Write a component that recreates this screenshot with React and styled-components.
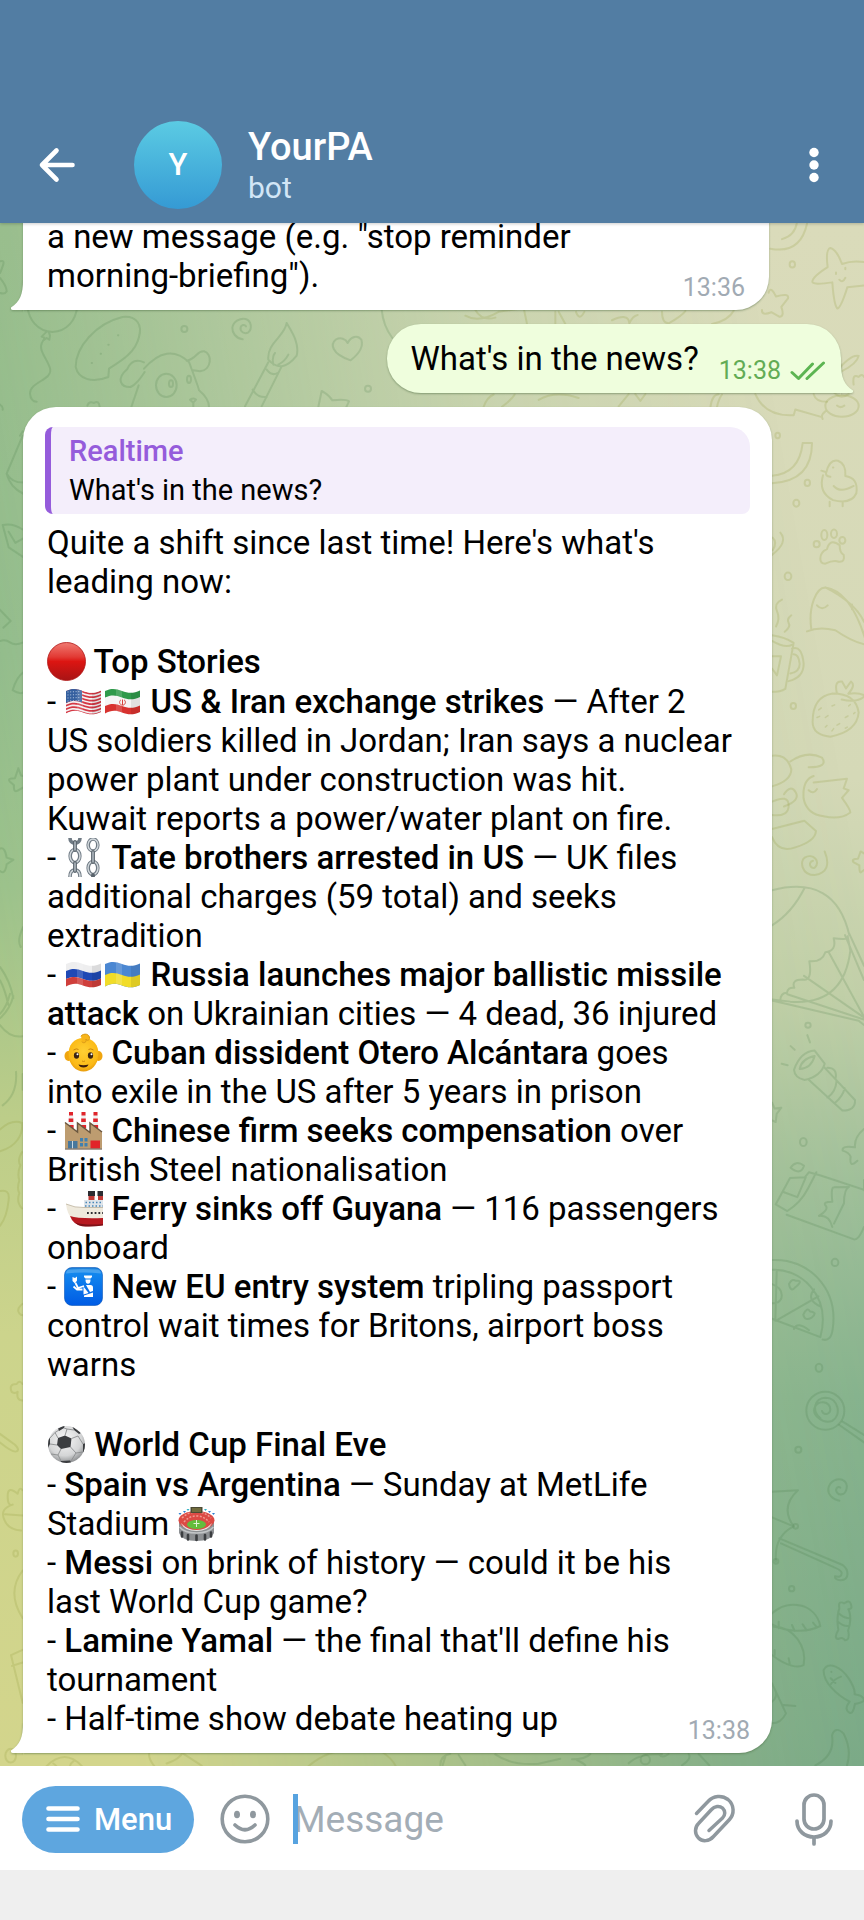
import React from 'react'
import styled, { createGlobalStyle } from 'styled-components'

const GlobalStyle = createGlobalStyle`
  * {
    box-sizing: border-box;
  }
  body {
    margin: 0;
    background: #efefef;
    font-family: Roboto, "Noto Sans", sans-serif;
    color: #000;
  }
  button, input {
    font-family: inherit;
  }
  p, h1, h2, ul {
    margin: 0;
    padding: 0;
    font: inherit;
  }
`;

const Screen = styled.div`
  display: flex;
  flex-direction: column;
  height: 100vh;
  overflow: hidden;
`;

/* ---------- header ---------- */

const Header = styled.header`
  position: relative;
  z-index: 2;
  flex: none;
  display: flex;
  align-items: center;
  height: 223px;
  padding: 106px 25px 0 32px;
  background: #527da3;
  box-shadow: 0 1px 3px rgba(0, 0, 0, 0.2);
`;

const IconButton = styled.button`
  display: flex;
  flex: none;
  align-items: center;
  justify-content: center;
  width: 50px;
  height: 50px;
  padding: 0;
  border: 0;
  background: none;
  color: ${props => props.$color || '#fff'};

  svg {
    display: block;
  }
`;

const Avatar = styled.div`
  flex: none;
  width: 88px;
  height: 88px;
  margin: 0 26px 0 52px;
  border-radius: 50%;
  background: linear-gradient(#5bcbe3, #359ad4);
  color: #fff;
  font-size: 31px;
  font-weight: 500;
  line-height: 88px;
  text-align: center;
`;

const Peer = styled.div`
  flex: 1;
  min-width: 0;
  padding-top: 2px;

  h1 {
    color: #fff;
    font-size: 38px;
    font-weight: 500;
    line-height: 44px;
  }
  p {
    color: #d2e6f6;
    font-size: 30px;
    line-height: 38px;
  }
`;

/* ---------- chat ---------- */

const Chat = styled.main`
  position: relative;
  z-index: 1;
  flex: 1;
  min-height: 0;
  overflow: hidden;
  display: flex;
  flex-direction: column;
  justify-content: flex-end;
  gap: 14px;
  padding: 0 23px 13px;
  background: linear-gradient(#dadbba 0%, #d5d9b7 36%, #c2d0a9 50%, #9fbf9b 62%, #82b18e 76%, #70a587 100%);

  &::before {
    content: "";
    position: absolute;
    inset: 0;
    background: linear-gradient(#8ab783 0%, #8dba88 28%, #9ac18a 43%, #bccd89 58%, #ccd48c 72%, #d3d58c 100%);
    mask-image: linear-gradient(80deg, #000 12%, rgba(0, 0, 0, 0.5) 45%, rgba(0, 0, 0, 0.2) 65%, transparent 90%);
  }
`;

const Doodles = styled.svg`
  position: absolute;
  inset: 0;
  width: 100%;
  height: 100%;
  fill: none;
  stroke: rgba(60, 115, 60, 0.17);
  stroke-width: 2;
  stroke-linecap: round;
  stroke-linejoin: round;

  .olive {
    stroke: rgba(140, 150, 50, 0.2);
  }
  path, circle, ellipse {
    vector-effect: non-scaling-stroke;
  }
`;

const Bubble = styled.article`
  position: relative;
  flex: none;
  align-self: ${props => (props.$out ? 'flex-end' : 'flex-start')};
  width: ${props => (props.$out ? 'auto' : `calc(100% - ${props.$inset || 69}px)`)};
  padding: ${props => props.$pad};
  border-radius: ${props => props.$radius};
  background: ${props => (props.$out ? '#effedd' : '#fff')};
  box-shadow: 0 1px 2px rgba(60, 90, 50, 0.45);
  font-size: 33px;
  line-height: 39px;
`;

const TailShape = styled.svg`
  position: absolute;
  bottom: 0;
  ${props => (props.$out ? 'right: -12px; transform: scaleX(-1);' : 'left: -12px;')}
  width: 24px;
  height: 30px;
  fill: ${props => (props.$out ? '#effedd' : '#fff')};
  filter: drop-shadow(0 1px 1px rgba(60, 90, 50, 0.4));
  clip-path: inset(0 12px -3px -3px);
`;

const LastLine = styled.div`
  display: flex;
  align-items: flex-end;
  justify-content: space-between;
  gap: 20px;
`;

const Meta = styled.span`
  display: flex;
  flex: none;
  align-items: center;
  gap: 9px;
  margin-bottom: -8px;
  color: ${props => (props.$out ? '#62ac55' : '#a1aab3')};
  font-size: 25px;
  line-height: 30px;
`;

const Quote = styled.blockquote`
  margin: 0 0 9px -2px;
  padding: 5px 18px 4px;
  border-left: 6px solid #955cdb;
  border-radius: 8px 20px 8px 8px;
  background: #f4eefb;
  font-size: 29px;
  line-height: 39px;

  h2 {
    color: #955cdb;
    font-weight: 500;
  }
`;

const Story = styled.div`
  margin-right: 7px;

  h2, strong {
    font-weight: 500;
  }
  h2 {
    margin: 41px 0 1px;
  }
  ul {
    list-style: none;
  }
`;

const EmojiSvg = styled.svg`
  display: inline-block;
  width: 39px;
  height: 39px;
  vertical-align: bottom;
`;

/* ---------- composer ---------- */

const Composer = styled.form`
  position: relative;
  z-index: 2;
  flex: none;
  display: flex;
  align-items: center;
  height: 104px;
  padding: 2px 25px 0 22px;
  background: #fff;
`;

const MenuButton = styled.button`
  display: flex;
  flex: none;
  align-items: center;
  gap: 13px;
  height: 67px;
  margin-right: 26px;
  padding: 0 22px 0 23px;
  border: 0;
  border-radius: 34px;
  background: #5ea6df;
  color: #fff;
  font-size: 31px;
  font-weight: 500;
`;

const Tools = styled.div`
  display: flex;
  flex: none;
  gap: 50px;
`;

const Field = styled.label`
  position: relative;
  flex: 1;
  min-width: 0;
  margin-left: 23px;

  &::after {
    content: "";
    position: absolute;
    top: 0;
    left: 0;
    width: 5px;
    height: 50px;
    background: #57a3e0;
  }
  input {
    display: block;
    width: 100%;
    height: 50px;
    padding: 0;
    border: 0;
    outline: 0;
    background: none;
    font-size: 37px;
  }
  input::placeholder {
    color: #a3adb6;
    opacity: 1;
  }
`;

const NavBar = styled.footer`
  flex: none;
  height: 50px;
  background: #efefef;
`;

/* ---------- emoji ---------- */

const Flag = ({ label, children, id }) => (
    <EmojiSvg viewBox="0 0 39 39" role="img" aria-label={label}>
        <clipPath id={id}>
            <path d="M2 9 C8 6 13 6.500 19 9 C25 11.500 31 11.500 37 8.500 V30 C31 33 25 33 19 30.500 C13 28 8 28 2 31.500Z" />
        </clipPath>
        <g clipPath={`url(#${id})`}>
            {children}
            <path d="M13 5h6v30h-6z" fill="#fff" opacity=".15" />
            <path d="M28 5h9v30h-9z" fill="#000" opacity=".08" />
        </g>
    </EmojiSvg>
)

const wave = (y, h) =>
    `M2 ${y} C8 ${y - 3} 13 ${y - 2.5} 19 ${y} S31 ${y + 2.5} 37 ${y - 0.5} v${h} C31 ${y + h + 2.5} 25 ${y + h + 2.5} 19 ${y + h} S8 ${y + h - 3} 2 ${y + h}Z`

const UsFlag = () => (
    <Flag label="United States" id="us">
        <path d="M0 0h39v39H0z" fill="#f4f1f2" />
        {[0, 1, 2, 3, 4, 5, 6].map(i => (
            <path key={i} d={wave(9 + i * 3.45, 1.8)} fill="#d53945" />
        ))}
        <path d="M2 5 H18 V20.500 C12 18 8 18 2 21Z" fill="#35609f" />
        {[10, 13, 16, 19].map(y => (
            <path key={y} d={`M3.500 ${y} L17 ${y - 0.5}`} stroke="#c9d7ea" strokeWidth=".9" strokeDasharray="1 1.700" />
        ))}
    </Flag>
)

const IranFlag = () => (
    <Flag label="Iran" id="ir">
        <path d="M0 0h39v39H0z" fill="#f5f4f4" />
        <path d={wave(7, 8.5)} fill="#2f9a4b" />
        <path d={wave(24, 9)} fill="#d8322f" />
        <g fill="none" stroke="#d8433c" strokeWidth="1">
            <path d="M19.500 17.500v6M18 17.700c-2 1.500-2 4.500 1 5.500M21 17.700c2 1.500 2 4.500-1 5.500" />
        </g>
    </Flag>
)

const RussiaFlag = () => (
    <Flag label="Russia" id="ru">
        <path d="M0 0h39v39H0z" fill="#eeeeef" />
        <path d={wave(16, 8)} fill="#1f49b5" />
        <path d={wave(24, 9)} fill="#cf3f3b" />
    </Flag>
)

const UkraineFlag = () => (
    <Flag label="Ukraine" id="ua">
        <path d="M0 0h39v39H0z" fill="#4b87d2" />
        <path d={wave(20, 13)} fill="#f1dc28" />
    </Flag>
)

const RedCircle = () => (
    <EmojiSvg viewBox="0 0 39 39" role="img" aria-label="Red circle">
        <defs>
            <linearGradient id="red" x1="0" y1="0" x2="0" y2="1">
                <stop offset="0" stopColor="#f07a72" />
                <stop offset=".38" stopColor="#e23a34" />
                <stop offset=".5" stopColor="#dc1512" />
                <stop offset="1" stopColor="#a81415" />
            </linearGradient>
        </defs>
        <circle cx="19.500" cy="19.500" r="19" fill="url(#red)" stroke="#b01615" strokeWidth=".8" />
    </EmojiSvg>
)

const Chains = () => (
    <EmojiSvg viewBox="0 0 39 39" role="img" aria-label="Chains">
        <g fill="none" stroke="#6f7a84" strokeWidth="3.600">
            <path d="M6 0c0 3 2 5 5 5s5-2 5-5" />
            <ellipse cx="11" cy="18" rx="4.800" ry="6.500" />
            <path d="M6 39c0-5 2-7 5-7s5 2 5 7" />
            <ellipse cx="29" cy="7" rx="4.800" ry="6" />
            <ellipse cx="29" cy="30" rx="4.800" ry="6.500" />
        </g>
        <g fill="none" stroke="#d3d9dd" strokeWidth="1.400">
            <ellipse cx="11" cy="18" rx="5" ry="6.500" />
            <ellipse cx="29" cy="7" rx="5" ry="6" />
            <ellipse cx="29" cy="30" rx="5" ry="6.500" />
            <path d="M6 39c0-5 2-7 5-7s5 2 5 7" />
        </g>
        <g stroke="#59636c" strokeWidth="3.800" strokeLinecap="round">
            <path d="M11 4v8M11 25v8M29 14v10M29 37v2" />
        </g>
        <g stroke="#b4bdc4" strokeWidth="1.500" strokeLinecap="round">
            <path d="M11 4v8M11 25v8M29 14v10" />
        </g>
    </EmojiSvg>
)

const Baby = () => (
    <EmojiSvg viewBox="0 0 39 39" role="img" aria-label="Baby">
        <defs>
            <radialGradient id="skin" cx=".5" cy=".4" r=".6">
                <stop offset="0" stopColor="#ffcf33" />
                <stop offset=".8" stopColor="#fbb916" />
                <stop offset="1" stopColor="#e89c0c" />
            </radialGradient>
        </defs>
        <ellipse cx="4.500" cy="23" rx="4" ry="5" fill="#f0a50e" />
        <ellipse cx="34.500" cy="23" rx="4" ry="5" fill="#f0a50e" />
        <path d="M19.500 5C29 5 35 12 34.500 22 C34 32 27 38.500 19.500 38.500 S5 32 4.500 22 C4 12 10 5 19.500 5Z" fill="url(#skin)" />
        <path d="M17 3c3-3.500 9-2 8.500 2.500-.3 2-3 2.500-3.500.5 1 3-2 5-4 3" fill="#f8b51a" stroke="#d99a18" strokeWidth="1" strokeLinecap="round" />
        <g fill="#3a2412">
            <ellipse cx="12.500" cy="22.500" rx="2.600" ry="3.200" />
            <ellipse cx="26.500" cy="22.500" rx="2.600" ry="3.200" />
        </g>
        <circle cx="13.500" cy="21.300" r="1" fill="#fff" />
        <circle cx="27.500" cy="21.300" r="1" fill="#fff" />
        <path d="M9.500 17q3-2 5-.500M24.500 16.500q2-1.500 5 .5" fill="none" stroke="#c98510" strokeWidth="1" />
        <path d="M14.500 31.500q5 1.500 10 0-1 3-5 3t-5-3z" fill="#3c1d0c" />
        <path d="M18 28q1.500 1 3 0" fill="none" stroke="#cf8a10" strokeWidth="1" />
    </EmojiSvg>
)

const Factory = () => (
    <EmojiSvg viewBox="0 0 39 39" role="img" aria-label="Factory">
        {[5, 17.5, 29.5].map(x => (
            <g key={x}>
                <path d={`M${x} 1h4l1 19h-6z`} fill="#f0eeee" />
                <path d={`M${x} 1h4v3.500h-4zM${x - 0.3} 7.500h4.600v3.500h-4.600zM${x - 0.6} 14h5.200v3.500h-5.200z`} fill="#e0242b" />
            </g>
        ))}
        <path d="M1 11.500L13.500 21V12L26 21.500V12L38 21V38H1z" fill="#bd9c70" />
        <path d="M1 11.500L13.500 21V12L26 21.500V12L38 21" fill="none" stroke="#6b573f" strokeWidth="1.500" />
        <path d="M4 30h9.500v8H4z" fill="#47779c" />
        <path d="M8.500 30v8" stroke="#c9d8e2" strokeWidth="1" />
        <path d="M16 27h3v3.500h-3zM20.500 27h3v3.500h-3zM16 32h3v3.500h-3zM20.500 32h3v3.500h-3z" fill="#3f80b0" />
        <path d="M26.500 29.500h9.500V38h-9.500z" fill="#e1242a" />
        <path d="M1 38h37" stroke="#8c8174" strokeWidth="1.500" />
    </EmojiSvg>
)

const Ship = () => (
    <EmojiSvg viewBox="0 0 39 39" role="img" aria-label="Ship">
        <path d="M24.500 3h6v9h-6zM34 3h5v9h-5z" fill="#c03a36" />
        <path d="M24 2h7v5h-7zM33.500 2H39v5h-5.500z" fill="#2c2c31" />
        <path d="M20 11h19v9H20z" fill="#dfe5ea" />
        <path d="M21.500 13.500H39M21 17H39" stroke="#4886b8" strokeWidth="1.500" strokeDasharray="1.500 2" />
        <path d="M2 15q9 4 18 3.500H39V31H9Q3 25 2 15z" fill="#efeadd" />
        <path d="M2 15q9 4 18 3.500H39" fill="none" stroke="#bcb29d" strokeWidth=".8" />
        <path d="M23 24H39" stroke="#2c2c31" strokeWidth="1.800" strokeDasharray="1.800 2" />
        <path d="M6 27q9 3 33 2v7q-10 2-21 1Q9 35.500 6 27z" fill="#b71920" />
        <path d="M11 33.500q10 3 28 1.500v1.500q-10 1.500-21 .8-4-.5-7-3.800z" fill="#7e1117" />
    </EmojiSvg>
)

const Passport = () => (
    <EmojiSvg viewBox="0 0 39 39" role="img" aria-label="Passport control">
        <defs>
            <linearGradient id="blue" x1="0" y1="0" x2="0" y2="1">
                <stop offset="0" stopColor="#1c7fd6" />
                <stop offset=".15" stopColor="#1287ee" />
                <stop offset="1" stopColor="#005be4" />
            </linearGradient>
        </defs>
        <rect x=".5" y=".5" width="38" height="38" rx="7.500" fill="url(#blue)" stroke="#0a56b8" strokeWidth=".6" />
        <path d="M5 2.500q14-1 29 0 3 1 3 4-17-2-35 0 0-3 3-4z" fill="#6fb9f5" opacity=".55" />
        <g fill="#fff">
            <path d="M20 8.500h8v1.500l-1.500 1.500h-5L20 10z" />
            <path d="M21.500 12.500h5q0 4.300-2.500 4.300t-2.500-4.300z" />
            <path d="M8.500 10l2.500 1 2-1.500v4l-2 3-2.500-2.500z" />
            <path d="M22 18h4.500q2.500 0 2.500 2.500V24l-3 1z" />
            <path d="M19.500 19.500l5 6.500-5 1.500z" />
            <path d="M20 28.500l9-3V30h-9z" />
        </g>
        <path d="M11.500 16l2.500 5 6-2M9.500 19.500l3.500 3h5.500" fill="none" stroke="#fff" strokeWidth="1.800" strokeLinejoin="round" />
    </EmojiSvg>
)

const Football = () => (
    <EmojiSvg viewBox="0 0 39 39" role="img" aria-label="Football">
        <defs>
            <radialGradient id="ball" cx=".45" cy=".35" r=".65">
                <stop offset="0" stopColor="#f8f8f8" />
                <stop offset=".7" stopColor="#d4d5d6" />
                <stop offset="1" stopColor="#909294" />
            </radialGradient>
            <clipPath id="ball-edge">
                <circle cx="19.500" cy="19.500" r="18.500" />
            </clipPath>
        </defs>
        <circle cx="19.500" cy="19.500" r="18.500" fill="url(#ball)" />
        <g clipPath="url(#ball-edge)">
            <g fill="#3b3d40">
                <path d="M11 13L18 10.500L24.500 13.500L23.500 22L14 24L10 20z" />
                <path d="M11 3.500L18 0L17 3L12 6z M25 1L34 8L32 9L27 5z M0 15L3 13L3 19L1 23z M36 19L39 18V28L36 28z M14 36L23 35.500L25 39H13z M3 29L6 34L5 36L0 30z" />
            </g>
            <path d="M11 13L8 7.500M18 10.500L20 4M24.500 13.500L31 11M23.500 22L29 28M14 24L11 30M10 20L3 19M29 28L36 27M29 28L24 36M11 30L14 36M11 30L4 29M20 4L27 5M20 4L17 3M8 7.500L12 5M8 7.500L3 13M31 11L36 19" fill="none" stroke="#8b8d8f" strokeWidth=".9" />
        </g>
    </EmojiSvg>
)

const Stadium = () => (
    <EmojiSvg viewBox="0 0 39 39" role="img" aria-label="Stadium">
        <path d="M2 16v13q3 8 17.500 8T37 29V16z" fill="#8d9093" />
        <path d="M2.500 23q5 6 17 6t17-6" fill="none" stroke="#c2c5c7" strokeWidth="1.500" />
        <path d="M5 28.500v4M11 31v4.500M28 31v4.500M34 28.500v4M19.500 31.500v4.500" stroke="#3b3e41" strokeWidth="2.600" strokeLinecap="round" />
        <ellipse cx="19.500" cy="16.500" rx="18" ry="9.500" fill="#dc4a44" />
        <path d="M5 14q6-6 14.500-6T34 14M7 18q5-6 12.500-6T32 18" fill="none" stroke="#ef9a90" strokeWidth="1.500" strokeDasharray="2 1.500" />
        <path d="M4 19q6 7 15.500 7T35 19q-3 8-15.500 8T4 19z" fill="#e9e6e4" />
        <ellipse cx="19.500" cy="20.500" rx="9.500" ry="4.500" fill="#63bd3c" />
        <path d="M16.500 19.500h6M19.500 16v7" stroke="#dff3d2" strokeWidth="1" />
        <path d="M13.500 3h12v6h-12z" fill="#4b4a34" />
        <path d="M15 5h9M15 7h9" stroke="#a9a14b" strokeWidth=".8" />
        <path d="M1.500 9l3 0-1.500 2zM6 7l3 0-1.500 2z" fill="#2f7fd0" />
        <path d="M9.500 5l3 0-1.500 2zM27 5l3 0-1.500 2z" fill="#38b3c4" />
        <path d="M31 7l3 0-1.500 2zM35 9l3 0-1.500 2z" fill="#2f7fd0" />
    </EmojiSvg>
)

/* ---------- icons ---------- */

const BackIcon = () => (
    <svg width="38" height="38" viewBox="0 0 38 38" fill="none" stroke="#fff" strokeWidth="4.600" strokeLinecap="round" strokeLinejoin="round">
        <path d="M34.500 19H4M18.500 4.500L4 19L18.500 33.500" />
    </svg>
)

const DotsIcon = () => (
    <svg width="12" height="38" viewBox="0 0 12 38" fill="#fff">
        <circle cx="6" cy="6.500" r="4.700" />
        <circle cx="6" cy="19" r="4.700" />
        <circle cx="6" cy="31.500" r="4.700" />
    </svg>
)

const BarsIcon = () => (
    <svg width="36" height="28" viewBox="0 0 36 28" stroke="#fff" strokeWidth="4.600" strokeLinecap="round">
        <path d="M3.500 3.500h29M3.500 14h29M3.500 24.500h29" />
    </svg>
)

const SmileIcon = () => (
    <svg width="50" height="50" viewBox="0 0 50 50" fill="none" stroke="currentColor" strokeWidth="3.600" strokeLinecap="round">
        <circle cx="25" cy="25" r="22.800" />
        <path d="M15 31q10 9.500 20 0" />
        <ellipse cx="17" cy="20.500" rx="3" ry="3.800" fill="currentColor" stroke="none" />
        <ellipse cx="33" cy="20.500" rx="3" ry="3.800" fill="currentColor" stroke="none" />
    </svg>
)

const ClipIcon = () => (
    <svg width="44" height="50" viewBox="0 0 44 50" fill="none" stroke="currentColor" strokeWidth="3.500" strokeLinecap="round">
        <path d="M4.500 19.500L16 7.500C21.500 1.500 30 .8 36 5.500C42.500 11 42.500 20 37.500 25.500L21.500 42.500C17 47.500 10.500 48 6.500 44C2.500 40 2.500 33.500 6.500 29.500L19.500 15.500C22.500 12 27.500 11.500 30.500 14C33.500 17 33.500 21 30.500 24L17 36.500" />
    </svg>
)

const MicIcon = () => (
    <svg width="40" height="54" viewBox="0 0 40 54" fill="none" stroke="currentColor" strokeWidth="3.700" strokeLinecap="round">
        <rect x="10" y="3" width="20" height="34" rx="10" />
        <path d="M3 29C3 39 11 45 20 45S37 39 37 29M20 45v7" />
    </svg>
)

const Checks = () => (
    <svg width="36" height="20" viewBox="0 0 36 20" fill="none" stroke="#5cb551" strokeWidth="3" strokeLinecap="round" strokeLinejoin="round">
        <path d="M2 11.500L8.500 17.500L22.500 3M17 17.500L33.500 2" />
    </svg>
)

const Tail = ({ out }) => (
    <TailShape $out={out} viewBox="0 0 24 30">
        <path d="M12 0C12 14 9 22 0 27.500Q-.500 30 2 30H24V0Z" />
    </TailShape>
)

const Wallpaper = () => (
    <Doodles viewBox="0 223 864 1543" preserveAspectRatio="xMidYMid slice" aria-hidden="true">
        {/* balloon, speech bubble, puppy, brush, heart */}
        <g transform="translate(0 223) scale(.33333)">
            <path d="M0 115q15-5 9 12T0 150M0 165q20 25 20 40-5 10-20 5" />
            <path d="M82 250c5 40 30 75 75 77c45-2 70-35 75-77M140 326l-15 15 8 3-2 8 9-7 8 5 2-12-4-12M135 346c-30 30 5 55 15 90s-60 40-60 75q2 25 20 25" />
            <path d="M325 462c-50 20-90 5-98-30c0-60 60-130 140-150c45-5 60 25 50 60c-10 45-50 70-90 95z" />
            <path d="M275 420h1M302 392h1M325 365h1M354 337h1" />
            <circle cx="553" cy="318" r="9" />
            <path d="M728 349c-20-3-32-20-31-35c3-20 25-30 40-26c18 6 20 30 8 40c-12 7-26-3-23-15c2-8 12-10 16-3" />
            <path d="M432 437q70-80 135-20q30 80 30 85q30 25 30 50M432 418q-35-15-50 20c-35 30-20 55 10 54q20-10 42-45M416 487l-22 65M560 413c30-5 30-30 52-28c25 5 25 55-12 60l-20-3" />
            <ellipse cx="499" cy="487" rx="31" ry="35" />
            <ellipse cx="513" cy="482" rx="6" ry="10" />
            <ellipse cx="567" cy="469" rx="6" ry="11" />
            <path d="M570 530q12-7 18 0l-8 9zM580 539v12M262 548q5-15 20-8q15-10 17 12" />
            <path d="M860 300c-5 40-60 60-55 110q40 45 85-12c10-40-20-80-30-98M805 418l-70 132M845 430l-60 120M800 440q15 20 32 10M758 500q15 25 42 22M820 425q-5-25 5-35M835 425q20-10 30-30" />
            <path d="M1052 412c-60-20-60-50-45-62c15-8 30-3 36 10c10-20 30-25 41-10c8 25-10 45-32 62z" />
            <circle cx="1104" cy="497" r="9" />
            <path d="M955 552l10-48q20 10 32 28q40-5 50 3l-8 17M1145 260q5 50 32 85" />
        </g>
        {/* stars, crab, rainbow, duck, paw, slice, mug, strawberry */}
        <g className="olive" transform="translate(432 220) scale(.33333 .3827)">
            <path d="M100 250q40 20 100-10l75-10 12 50M130 235q20 30 60 20M370 240v32M380 240l20 32M432 240q10 25 25 0M540 262q50-20 52 8q10-20 25-22M690 240q0 30 20 30 40-20 50-32M840 272q50-10 65-35" />
            <path d="M1015 75q90 15 110-65M1050 50q40-10 45-45" />
            <circle cx="1081" cy="116" r="8" />
            <path d="M1195 73q20 5 35 42q30-10 66-5M1195 73q-15 5-8 50q-45 25-46 38q0 10 60 2q5 60 15 68q10 0 30-55l50-5M1222 156q10 10 18-5M1212 137v4M1240 125v4" />
            <path d="M1010 190q5-20 22 10q40-10 36 5l-20 22q10 25-5 26l-25-12q-30 10-28-6" />
            <path d="M1210 400q45-50 70-45q-5 20-50 40M1245 440q-35-10-40 10q20 20 45 5M1265 430q-5-30 15-20q10-10 16 0" />
            <ellipse cx="1230" cy="486" rx="50" ry="28" />
            <path d="M1145 455q5 20 40 20M1180 500q-15 10-8 20M1215 485q10 8 22 0M835 490q5-35 25-35M855 488q5-20 15-32M970 455q30 60 115 55l5-15 80 20M590 455l-30 32M155 488q10-25 30-32M210 488q30-20 38-32M320 470q50-25 120-5M610 455l15 18 15-18" />
            <circle cx="1037" cy="563" r="7" />
            <path d="M1112 583l28 0q0 100-120 105M1112 583q-10 80-92 85" />
            <path d="M1168 655l15 4q10-35 35-30q25 8 22 40q40 5 33 45q-15 30-70 18q-45-20-30-65M1183 659q-5 10 12 12M1203 647h1M1205 695q20 20 60 0M1193 736v12M1232 736v12" />
            <circle cx="1126" cy="687" r="8" />
            <circle cx="1093" cy="740" r="9" />
            <circle cx="1068" cy="931" r="10" />
            <ellipse cx="1154" cy="847" rx="9" ry="8" />
            <ellipse cx="1177" cy="823" rx="9" ry="13" />
            <ellipse cx="1206" cy="820" rx="9" ry="11" />
            <ellipse cx="1231" cy="837" rx="9" ry="9" />
            <path d="M1165 885q0-18 20-25q8-30 38-10q0 20 12 25q5 20-15 18q-15-5-40 5q-15 0-15-13zM1045 817q25 25-25 58M1022 830q15 12 0 33" />
            <path d="M1138 1070c-10-60 15-110 42-110q80 10 125 150q-40-5-95-38q-50-10-85 3M1180 960q90 40 116 90M1155 1007q15 15 32 0M1260 1005v12" />
            <path d="M1020 1085q40 5 65 20l-25 120q-15 8-40 8M1020 1100q40 20 60 10M1080 1120q30-10 35 40q0 35-45 45M1085 1135q15 0 18 25q0 20-28 25M1015 1140l32 0-12 50-15-18M1050 992q-25 10-15 30t-3 40M1078 1033q-15 10-8 20t-12 23" />
            <circle cx="1084" cy="1270" r="8" />
            <path d="M1142 1310q0-65 60-73q70 0 78 50q-5 50-85 63q-55-5-53-40zM1215 1238q-10-35 15-32l12 18 15-18q15 10-8 32q30-5 50 5q-20 20-70 10" />
            <path d="M1160 1280l8-5M1155 1300l8-3M1180 1300l8-5M1200 1270l8-3M1215 1320l8-4M1240 1300l8-4M1200 1335l5-6M1250 1270l5-4M1180 1325l5-4M1240 1328l6-3M1265 1290l4-3" strokeWidth="1.500" />
            <path d="M1020 1400q45-5 58 35q0 30-58 45M1075 1415q50-30 95-10q20 25-40 25M1145 1470l100-10-10 25 15 5-20 20q25 30 25 38q-30 20-80 10q-50-5-60-45q-5-50 30-60M1130 1490q15 12 25-3M1020 1520q50-20 50 10t-50 25" />
        </g>
        {/* parachute, torch, chocolate, pizza */}
        <g transform="translate(764 780) scale(.33333 .40816)">
            <g className="olive">
                <path d="M24 140q20 40 70 25q60-15 62-40l-35-25-97 20M60 35q20-25 35-5t-35 35" />
                <path d="M182 175q25 50-30 58c-40 0-45-35-30-43c25-12 50 10 30 25c-15 3-20-15-5-17M300 180l-10-5-8 18q-20 0-14 8l18 8q0 20 5 17l10-6" />
            </g>
            <path d="M24 270q190-40 232 110M24 356q60-30 98-92M24 538l55 5q160 10 180-125l-8-35q5 10-42 5q10 30-25 34q-10 25-48 22q10 50-20 45q-35 0-25 20-20-2-22 12q-20 0-20 20M70 525l230 62M120 480l180 102M193 420l107 160M243 380l57 110M255 375l45 80M24 540l260 50 16 10" />
            <ellipse cx="132" cy="601" rx="8" ry="6" />
            <path d="M90 710q20-45 62-47l30 32q-10 30-60 40q-30-5-32-25zM107 708q5-25 45-32q-10 30-45 32M135 735l100 75q40 0 38-26l-92-80M190 705q30 0 25 25M190 778q25-12 28-42M214 790q22-15 28-35M130 625l8 18M80 652l12 9M53 695l18 4M24 790l8 15 20-2-14 15-3 20-11-4" />
            <circle cx="118" cy="887" r="10" />
            <path d="M35 1040l43-65 45-2 12-12 35 8l130 35M35 1040l35 16q40-20 62-55t25-40M68 1065l200 60q15 5 32-30M60 1010l40 12 25-48M205 1095q-10-30-40-27q30-15 20-25t20-10q-5-35 5-35l45-1q-15 5-15 40l-30 50M80 950q15-20 40-5q-10 25-40 5M300 855q-30 20-27 45q-40-5-37 8q20 5 24 15q-5 30 20 10M300 980v25" />
            <ellipse cx="213" cy="1182" rx="10" ry="9" />
            <path d="M24 1176c110-5 200 70 182 170q-5 30-30 25M24 1200c80-5 180 60 145 165L24 1320M35 1325L163 1265M38 1205l-4 120M24 1235q35 10 28 35q-5 12-28 12M150 1248q-25 25 20 42M90 1345q10-20 45 3M75 1235q10-15 20-8q25-2 0 15q-15 15-20-7M118 1310q10-20 20-8q25 2 5 15q-20 10-25-7" />
            <circle cx="165" cy="1440" r="10" />
        </g>
        {/* lollipop, umbrella, palm, candy, fish */}
        <g transform="translate(432 1400) scale(.33333)">
            <circle cx="1180" cy="32" r="57" />
            <path d="M1165 55c-25-20-20-60 15-62c40 0 50 55 20 70c-30 10-60-20-52-40c10-25 45-20 47 5c0 15-20 20-25 5M1222 75l74 52M1232 65l64 40" />
            <circle cx="1099" cy="149" r="9" />
            <path d="M1222 302c-20-3-35-20-33-35c3-25 30-35 45-26c18 10 10 40-5 42c-12 3-20-10-15-18c3-5 8-5 11-2" />
            <path d="M1020 275l78-4q-55 50-13 108q-60 30-53 105M1020 352l65 27M1042 415l190 80c20 15 20 45-5 46q-20-2-18-12q20 5 20-10q0-8-22-17l-160-72" />
            <circle cx="1091" cy="379" r="7" />
            <circle cx="1032" cy="484" r="7" />
            <circle cx="1079" cy="566" r="8" />
            <path d="M1020 640c50-45 130-30 145 38c-40 20-100 20-145-5M1025 680c60 0 100 60 90 115c-15 10-50 5-95-30M1040 665v20M1080 675l8 18M1112 673l12 18M1143 668l10 12M1028 750v15M1070 775l3 15M1020 850l42 90q-15 30-42 30M1020 905q15-10 12-30M1055 915l35 3" />
            <path d="M1222 625q-5-25 15-15q15-12 20 3t-8 15M1222 625c-10 30-5 45-3 65M1250 628c10 25 5 45-2 65M1220 640q15 15 35 15M1218 665q15 15 32 13M1219 690q-15 25 0 27q15-7 20 4q15 0 10-28" />
            <path d="M1253 905c-40-20-80-60-78-95c15-30 55-5 75 25q20 30 18 48q30 5 28 20-20 10-27 8-5 30-15 28-20-10-1-34zM1197 852q10-15 30-22M1198 815v1M1196 835l14 14" />
            <path d="M1150 1096q60-30 50-90q10-30 35-5q25 50 10 95M25 1096q0-30 30-35M40 1070l-8 26M80 1065l20 31M190 1063q50 35 130 28l65-15M420 1078q40 0 55-16M435 1080q20 10 25 16M590 1090q30-30 100-28M680 1062q10 15 30 0M770 1062q10 15-20 34M800 1062l32 34" />
            <circle cx="640" cy="1079" r="14" />
        </g>
        {/* left edge */}
        <g transform="translate(0 400) scale(.33333 .44643)">
            <path d="M68 80l-48 85q10 30 50 45M20 165q15 20 50 20M0 10q10 5 8 12M68 70l-8 10M8 280q30-5 60 10M8 280l18 50 44 22M26 295l20 25 24-10M0 470l32 25-22 15M0 540q15-5 30 3t40 0M70 610q-20 10-32 40 20 10 32 5M55 825l8 16 7 1M55 825l-10 22q-25 0-15 8l12 8q-2 15 8 13l20-8M0 1005q15-5 20 20l20 5-20 10q-5 25-20 15M70 1180q-20 30-8 45M0 1270q30 30 40 70M0 1300q15 20 25 55M40 1335q-10 30-40 50M30 1330q-10 30-30 45M0 1400q30 30 68 25M48 1505q5 50-40 75M68 1510v35" />
        </g>
        <g className="olive" transform="translate(0 1100) scale(.33333 .43365)">
            <path d="M0 118c50-10 70-40 66-65q-30-10-66 15M66 120q-15 20-5 30q-10 20-3 35q-8 20 0 30q-10 20 8 35M0 210q30-5 26 20q-5 40-26 60M68 470q-20 12-10 22q5 5 12 4M68 655q-10-10-18 0q-25 0-15 18q10 5 18 0q-5 20 15 20M0 770l45 25q15 12 5 15-10 5-50-20M68 900q-10-10-15 8q-30-20-30 5t15 20q-40 10-25 35q10 22 50 25M15 955l53 3M68 1085q-50 50 0 110M68 1268l-35 12 35 110M36 1305l32-8" />
            <circle cx="47" cy="1046" r="7" />
            <circle cx="32" cy="1512" r="16" />
            <path d="M135 1540q60-50 115 0M160 1530q10 5 12 10M220 1525q-10 5-10 12M450 1500q-10 15 15 38M545 1505q30 15 60 30M920 1540q70-50 170-40M1140 1500q40 20 48 38M500 1530q40-10 50-28" />
        </g>
    </Doodles>
)

const App = () => {
    return (
        <Screen>
            <GlobalStyle />
            <Header>
                <IconButton aria-label="Back"><BackIcon /></IconButton>
                <Avatar>Y</Avatar>
                <Peer>
                    <h1>YourPA</h1>
                    <p>bot</p>
                </Peer>
                <IconButton aria-label="More options"><DotsIcon /></IconButton>
            </Header>

            <Chat>
                <Wallpaper />
                <Bubble $inset={72} $radius="0 0 33px 0" $pad="0 24px 15px">
                    <Tail />
                    <LastLine>
                        <p>a new message (e.g. "stop reminder morning-briefing").</p>
                        <Meta>13:36</Meta>
                    </LastLine>
                </Bubble>

                <Bubble $out $radius="34px 34px 0 34px" $pad="15px 15px 15px 24px">
                    <Tail out />
                    <LastLine>
                        <p>What's in the news?</p>
                        <Meta $out>13:38 <Checks /></Meta>
                    </LastLine>
                </Bubble>

                <Bubble $radius="33px 33px 33px 0" $pad="20px 22px 15px 24px">
                    <Tail />
                    <Quote>
                        <h2>Realtime</h2>
                        <p>What's in the news?</p>
                    </Quote>
                    <Story>
                        <p>Quite a shift since last time! Here's what's leading now:</p>
                        <h2><RedCircle /> Top Stories</h2>
                        <ul>
                            <li>- <UsFlag /><IranFlag /> <strong>US &amp; Iran exchange strikes</strong> — After 2<br />US soldiers killed in Jordan; Iran says a nuclear power plant under construction was hit.<br />Kuwait reports a power/water plant on fire.</li>
                            <li>- <Chains /> <strong>Tate brothers arrested in US</strong> — UK files additional charges (59 total) and seeks extradition</li>
                            <li>- <RussiaFlag /><UkraineFlag /> <strong>Russia launches major ballistic missile attack</strong> on Ukrainian cities — 4 dead, 36 injured</li>
                            <li>- <Baby /> <strong>Cuban dissident Otero Alcántara</strong> goes<br />into exile in the US after 5 years in prison</li>
                            <li>- <Factory /> <strong>Chinese firm seeks compensation</strong> over British Steel nationalisation</li>
                            <li>- <Ship /> <strong>Ferry sinks off Guyana</strong> — 116 passengers onboard</li>
                            <li>- <Passport /> <strong>New EU entry system</strong> tripling passport control wait times for Britons, airport boss warns</li>
                        </ul>
                        <h2><Football /> World Cup Final Eve</h2>
                        <ul>
                            <li>- <strong>Spain vs Argentina</strong> — Sunday at MetLife Stadium <Stadium /></li>
                            <li>- <strong>Messi</strong> on brink of history — could it be his<br />last World Cup game?</li>
                            <li>- <strong>Lamine Yamal</strong> — the final that'll define his tournament</li>
                        </ul>
                    </Story>
                    <LastLine>
                        <p>- Half-time show debate heating up</p>
                        <Meta>13:38</Meta>
                    </LastLine>
                </Bubble>
            </Chat>

            <Composer>
                <MenuButton type="button"><BarsIcon /> Menu</MenuButton>
                <IconButton type="button" aria-label="Emoji" $color="#8f989e"><SmileIcon /></IconButton>
                <Field>
                    <input type="text" placeholder="Message" aria-label="Message" />
                </Field>
                <Tools>
                    <IconButton type="button" aria-label="Attach" $color="#8f989e"><ClipIcon /></IconButton>
                    <IconButton type="button" aria-label="Record voice message" $color="#8f989e"><MicIcon /></IconButton>
                </Tools>
            </Composer>
            <NavBar />
        </Screen>
    )
}

export default App
